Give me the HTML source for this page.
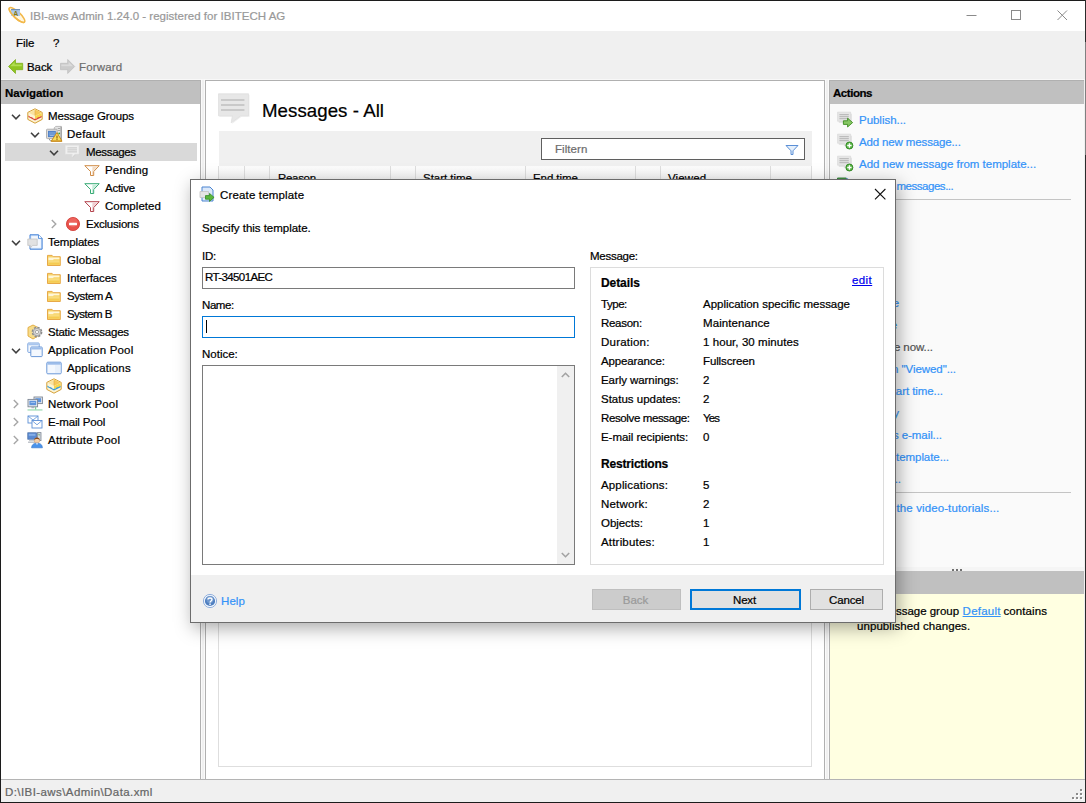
<!DOCTYPE html>
<html><head><meta charset="utf-8"><title>IBI-aws Admin</title>
<style>
*{box-sizing:border-box;margin:0;padding:0}
html,body{width:1086px;height:803px;overflow:hidden;background:#f0f0f0}
body{font-family:"Liberation Sans",sans-serif;font-size:11.5px;color:#000;position:relative;-webkit-text-stroke:.22px}
.a{position:absolute;white-space:nowrap}
svg{position:absolute;display:block;overflow:visible}
.t{position:absolute;white-space:nowrap;height:18px;line-height:18px;font-size:11.5px}
.lnk{color:#3493f8}
.b{font-weight:bold}
</style></head><body>
<div class="a" style="left:1px;top:1px;width:1084px;height:30px;background:#fff"></div>
<svg style="left:8px;top:7px" width="18" height="17" viewBox="0 0 18 17"><ellipse cx="9" cy="8" rx="10.3" ry="3.2" fill="#fff0cc" fill-opacity=".6" stroke="#f2b84a" stroke-width="1.5" transform="rotate(43 9 8)"/>
<rect x="3" y="2" width="9" height="7" fill="#a8c8ee" fill-opacity=".9"/><rect x="3" y="2" width="9" height="1.2" fill="#6f8fb4"/>
<text x="5.2" y="8.6" font-family="Liberation Sans,sans-serif" font-size="7" font-weight="bold" fill="#8a7a10">A</text>
<ellipse cx="9" cy="8" rx="10.3" ry="3.2" fill="none" stroke="#f2b84a" stroke-width="1.5" pathLength="100" stroke-dasharray="50 50" transform="rotate(43 9 8)"/></svg>
<div class="t" id="title" style="left:30px;top:7px;color:#999;letter-spacing:0.019px">IBI-aws Admin 1.24.0 - registered for IBITECH AG</div>
<svg style="left:966px;top:10px" width="12" height="12" viewBox="0 0 12 12"><path d="M0.5 5.5 H10.5" stroke="#8a8a8a" stroke-width="1"/></svg>
<svg style="left:1011px;top:10px" width="12" height="12" viewBox="0 0 12 12"><rect x="0.5" y="0.5" width="9" height="9" fill="none" stroke="#8a8a8a" stroke-width="1"/></svg>
<svg style="left:1057px;top:10px" width="12" height="12" viewBox="0 0 12 12"><path d="M0.5 0.5 L10 10 M10 0.5 L0.5 10" stroke="#8a8a8a" stroke-width="1"/></svg>
<div class="t" style="left:16px;top:34px;letter-spacing:-0.058px">File</div>
<div class="t" style="left:53px;top:34px;letter-spacing:-0.606px">?</div>
<svg style="left:8px;top:59px" width="16" height="16" viewBox="0 0 16 16"><path d="M0.5 7.5 L7.5 0.5 L7.5 4.3 L14.7 4.3 L14.7 10.7 L7.5 10.7 L7.5 14.5 Z" fill="#8fc520" stroke="#78ab14" stroke-width=".7" stroke-linejoin="round"/>
<path d="M2.2 7.3 L6.6 2.9 L6.6 5.4 L13.8 5.4 L13.8 7.3 Z" fill="#b7e25a" opacity=".85"/></svg>
<svg style="left:60px;top:59px" width="16" height="16" viewBox="0 0 16 16"><path d="M14.7 7.5 L7.7 0.5 L7.7 4.3 L0.5 4.3 L0.5 10.7 L7.7 10.7 L7.7 14.5 Z" fill="#cbcbcb" stroke="#bcbcbc" stroke-width=".7" stroke-linejoin="round"/>
<path d="M13 7.3 L8.6 2.9 L8.6 5.4 L1.4 5.4 L1.4 7.3 Z" fill="#dedede" opacity=".85"/></svg>
<div class="t" style="left:27px;top:58px;letter-spacing:-0.07px">Back</div>
<div class="t" style="left:79px;top:58px;color:#6d6d6d;letter-spacing:0.159px">Forward</div>
<div class="a" style="left:1px;top:79px;width:1084px;height:1px;background:#f8f8f8"></div>
<div class="a" style="left:201px;top:79px;width:4px;height:700px;border-left:1px solid #fafafa;border-right:1px solid #fafafa"></div>
<div class="a" style="left:825px;top:79px;width:4px;height:700px;border-left:1px solid #fafafa;border-right:1px solid #fafafa"></div>
<div class="a" style="left:1px;top:80px;width:200px;height:700px;background:#fff;border-right:1px solid #b0b0b0;border-top:1px solid #b0b0b0"></div>
<div class="a" style="left:1px;top:81px;width:199px;height:23px;background:#c0c0c0"></div>
<div class="t b" style="left:5px;top:84px;letter-spacing:-0.07px">Navigation</div>
<div class="a" style="left:5px;top:143px;width:192px;height:18px;background:#d9d9d9"></div>
<svg style="left:10.5px;top:114px" width="10" height="6" viewBox="0 0 10 6"><path d="M1 0.8 L5 4.8 L9 0.8" fill="none" stroke="#404040" stroke-width="1.6"/></svg>
<svg style="left:27px;top:108px" width="16" height="16" viewBox="0 0 16 16"><path d="M8 0.8 L15.2 4.4 L15.2 11.4 L8 15.2 L0.8 11.4 L0.8 4.4 Z" fill="#fdf4d4" stroke="#d4a038" stroke-width="1" stroke-linejoin="round"/>
<path d="M8 8 L14.6 4.9 L14.6 8.2 L8 11.3 Z" fill="#f8d64a"/>
<path d="M8 1.6 L14.4 4.8 L8 8 L1.6 4.8 Z" fill="#f9e3a2"/>
<path d="M8 1.6 L14.4 4.8 L8 8 Z" fill="#f6c85a"/>
<path d="M7.6 2.6 h.8 v4.6 h-.8z" fill="#e0a840" opacity=".7"/>
<path d="M1.4 7.5 L3.4 8.9 L5 9.2 L6.4 10.4 L8 10.9 L9.6 10.4 L11 9.2 L12.6 8.9 L14.6 7.7 L14.6 9.3 L8 12.6 L1.4 9.1 Z" fill="#d8433a"/></svg>
<div class="t nv" style="left:48px;top:107px;letter-spacing:-0.12px">Message Groups</div>
<svg style="left:29.5px;top:132px" width="10" height="6" viewBox="0 0 10 6"><path d="M1 0.8 L5 4.8 L9 0.8" fill="none" stroke="#404040" stroke-width="1.6"/></svg>
<svg style="left:46px;top:126px" width="16" height="16" viewBox="0 0 16 16"><path d="M8.2 1.8 l1.6 -1.4 h5.6 v13.8 h-7.2z" fill="#e4e4e4" stroke="#a4a4a4" stroke-width=".7"/>
<rect x="14.6" y="0.8" width=".9" height="13" fill="#8e8e8e"/>
<rect x="11.8" y="2.2" width="2.4" height=".8" fill="#9a9a9a"/><rect x="11.8" y="4" width="2.4" height=".8" fill="#9a9a9a"/>
<circle cx="13.2" cy="7.4" r=".9" fill="#3aa832"/>
<rect x="0.5" y="3.2" width="10.6" height="9.4" rx=".8" fill="#dcdcdc" stroke="#a2a2a2" stroke-width=".8"/>
<rect x="2" y="4.9" width="7.8" height="6.2" fill="#4c7ec6"/><rect x="2.8" y="5.8" width="6.2" height="4.4" fill="#6e9ad6"/>
<rect x="4" y="9.2" width="3.6" height=".7" fill="#a8c4ea"/>
<path d="M3.4 13 c0 1.6 1 2 2.6 2" fill="none" stroke="#8e949c" stroke-width="1"/>
<path d="M11 6.6 L16 15.2 L5.2 15.2 Z" fill="#f8de5c" stroke="#c98a1e" stroke-width="1" stroke-linejoin="round"/>
<rect x="5.4" y="14.6" width="10.4" height="1" fill="#c98a1e"/>
<rect x="10.4" y="9.6" width="1.2" height="3" fill="#9a6410"/><rect x="10.4" y="13.1" width="1.2" height="1" fill="#9a6410"/></svg>
<div class="t nv" style="left:67px;top:125px;letter-spacing:0.237px">Default</div>
<svg style="left:48.5px;top:150px" width="10" height="6" viewBox="0 0 10 6"><path d="M1 0.8 L5 4.8 L9 0.8" fill="none" stroke="#404040" stroke-width="1.6"/></svg>
<svg style="left:65px;top:144px" width="16" height="16" viewBox="0 0 16 16"><path d="M1.3 2.4 h13.4 v8.6 h-4 l-2.8 2.8 l0.2 -2.8 h-6.8z" fill="#cfcfcf" opacity=".5"/>
<path d="M0.5 1.5 h13.4 v8.6 h-4 l-2.8 2.8 l0.2 -2.8 h-6.8z" fill="#f0f0f0" stroke="#e6e6e6" stroke-width=".7"/>
<rect x="2.4" y="3.4" width="9.6" height="1" fill="#c6c6c6"/><rect x="2.4" y="5.4" width="9.6" height="1" fill="#c6c6c6"/><rect x="2.4" y="7.4" width="9.6" height="1" fill="#c6c6c6"/></svg>
<div class="t nv" style="left:86px;top:143px;letter-spacing:-0.328px">Messages</div>
<svg style="left:84px;top:162px" width="16" height="16" viewBox="0 0 16 16"><path d="M0.8 3.7 L15.2 3.7 L9.7 9.5 L9.7 13.5 L6.5 13.5 L6.5 9.5 Z" fill="#fff" stroke="#d08c46" stroke-width="1" stroke-linejoin="round"/>
<path d="M8.5 4.4 L13.6 4.4 L9 9.2 L9 12.8 L8 12.8 Z" fill="#f3dcc4"/></svg>
<div class="t nv" style="left:105px;top:161px;letter-spacing:0.169px">Pending</div>
<svg style="left:84px;top:180px" width="16" height="16" viewBox="0 0 16 16"><path d="M0.8 3.7 L15.2 3.7 L9.7 9.5 L9.7 13.5 L6.5 13.5 L6.5 9.5 Z" fill="#fff" stroke="#36aa74" stroke-width="1" stroke-linejoin="round"/>
<path d="M8.5 4.4 L13.6 4.4 L9 9.2 L9 12.8 L8 12.8 Z" fill="#c4ecd8"/></svg>
<div class="t nv" style="left:105px;top:179px;letter-spacing:-0.255px">Active</div>
<svg style="left:84px;top:198px" width="16" height="16" viewBox="0 0 16 16"><path d="M0.8 3.7 L15.2 3.7 L9.7 9.5 L9.7 13.5 L6.5 13.5 L6.5 9.5 Z" fill="#fff" stroke="#b3424c" stroke-width="1" stroke-linejoin="round"/>
<path d="M8.5 4.4 L13.6 4.4 L9 9.2 L9 12.8 L8 12.8 Z" fill="#efcdd0"/></svg>
<div class="t nv" style="left:105px;top:197px;letter-spacing:0.031px">Completed</div>
<svg style="left:51.0px;top:219px" width="6" height="10" viewBox="0 0 6 10"><path d="M0.8 1 L4.8 5 L0.8 9" fill="none" stroke="#a6a6a6" stroke-width="1.4"/></svg>
<svg style="left:65px;top:216px" width="16" height="16" viewBox="0 0 16 16"><circle cx="8" cy="8" r="6.6" fill="#e8514a" stroke="#d03a34" stroke-width=".8"/>
<circle cx="8" cy="6.6" r="4.6" fill="#f0716a" opacity=".6"/>
<rect x="4" y="6.7" width="8" height="2.6" rx=".6" fill="#fff"/></svg>
<div class="t nv" style="left:86px;top:215px;letter-spacing:-0.217px">Exclusions</div>
<svg style="left:10.5px;top:240px" width="10" height="6" viewBox="0 0 10 6"><path d="M1 0.8 L5 4.8 L9 0.8" fill="none" stroke="#404040" stroke-width="1.6"/></svg>
<svg style="left:27px;top:234px" width="16" height="16" viewBox="0 0 16 16"><path d="M3 0.8 h8.5 l3.6 3.6 v10.8 h-12.1z" fill="#d6e6fb" stroke="#3f7fd6" stroke-width="1"/>
<path d="M4.5 2.2 h6.3 v3 h3 v8.6 h-9.3z" fill="#f4f8fe"/>
<path d="M11.5 0.8 v3.6 h3.6" fill="#fff" stroke="#3f7fd6" stroke-width=".8"/>
<path d="M0.8 5 h9.4 v6.4 h-4.4 l-2.6 2.4 v-2.4 h-2.4z" fill="#e2e2e2" stroke="#c4c4c4" stroke-width=".8"/></svg>
<div class="t nv" style="left:48px;top:233px;letter-spacing:-0.158px">Templates</div>
<svg style="left:46px;top:252px" width="16" height="16" viewBox="0 0 16 16"><path d="M1.5 3.4 h4.6 l1.2 1.3 h7 v8.8 h-12.8z" fill="#f7d468" stroke="#e4a23c" stroke-width=".9" stroke-linejoin="round"/>
<path d="M2.4 5.6 h11 v1.6 h-5.6 l-1 1 h-4.4z" fill="#fff6d8"/>
<rect x="2.4" y="8.4" width="11" height="4.3" fill="#f9dc7e"/>
<rect x="2.4" y="10.6" width="11" height="2.1" fill="#f5cb52"/></svg>
<div class="t nv" style="left:67px;top:251px;letter-spacing:0.125px">Global</div>
<svg style="left:46px;top:270px" width="16" height="16" viewBox="0 0 16 16"><path d="M1.5 3.4 h4.6 l1.2 1.3 h7 v8.8 h-12.8z" fill="#f7d468" stroke="#e4a23c" stroke-width=".9" stroke-linejoin="round"/>
<path d="M2.4 5.6 h11 v1.6 h-5.6 l-1 1 h-4.4z" fill="#fff6d8"/>
<rect x="2.4" y="8.4" width="11" height="4.3" fill="#f9dc7e"/>
<rect x="2.4" y="10.6" width="11" height="2.1" fill="#f5cb52"/></svg>
<div class="t nv" style="left:67px;top:269px;letter-spacing:-0.07px">Interfaces</div>
<svg style="left:46px;top:288px" width="16" height="16" viewBox="0 0 16 16"><path d="M1.5 3.4 h4.6 l1.2 1.3 h7 v8.8 h-12.8z" fill="#f7d468" stroke="#e4a23c" stroke-width=".9" stroke-linejoin="round"/>
<path d="M2.4 5.6 h11 v1.6 h-5.6 l-1 1 h-4.4z" fill="#fff6d8"/>
<rect x="2.4" y="8.4" width="11" height="4.3" fill="#f9dc7e"/>
<rect x="2.4" y="10.6" width="11" height="2.1" fill="#f5cb52"/></svg>
<div class="t nv" style="left:67px;top:287px;letter-spacing:-0.41px">System A</div>
<svg style="left:46px;top:306px" width="16" height="16" viewBox="0 0 16 16"><path d="M1.5 3.4 h4.6 l1.2 1.3 h7 v8.8 h-12.8z" fill="#f7d468" stroke="#e4a23c" stroke-width=".9" stroke-linejoin="round"/>
<path d="M2.4 5.6 h11 v1.6 h-5.6 l-1 1 h-4.4z" fill="#fff6d8"/>
<rect x="2.4" y="8.4" width="11" height="4.3" fill="#f9dc7e"/>
<rect x="2.4" y="10.6" width="11" height="2.1" fill="#f5cb52"/></svg>
<div class="t nv" style="left:67px;top:305px;letter-spacing:-0.552px">System B</div>
<svg style="left:27px;top:324px" width="16" height="16" viewBox="0 0 16 16"><path d="M6 1 L11 3.5 L11 12 L6 15 L1 12 L1 3.5 Z" fill="#f7dc8a" stroke="#e0a83a" stroke-width=".9"/>
<circle cx="10" cy="8" r="4.6" fill="#cfcfcf" stroke="#8c8c8c" stroke-width="1.6" stroke-dasharray="2.2 1.4"/>
<circle cx="10" cy="8" r="3.6" fill="#d9d9d9" stroke="#9a9a9a" stroke-width=".7"/>
<circle cx="10" cy="8" r="1.6" fill="#fff" stroke="#8c8c8c" stroke-width=".7"/></svg>
<div class="t nv" style="left:48px;top:323px;letter-spacing:-0.238px">Static Messages</div>
<svg style="left:10.5px;top:348px" width="10" height="6" viewBox="0 0 10 6"><path d="M1 0.8 L5 4.8 L9 0.8" fill="none" stroke="#404040" stroke-width="1.6"/></svg>
<svg style="left:27px;top:342px" width="16" height="16" viewBox="0 0 16 16"><rect x="0.8" y="1" width="11.4" height="9.4" rx=".8" fill="#f4f8fe" stroke="#7ba4de" stroke-width="1"/>
<rect x="1.3" y="1.5" width="10.4" height="1.8" fill="#a9c6ee"/>
<rect x="3.8" y="5" width="11.4" height="9.6" rx=".8" fill="#f4f8fe" stroke="#6a98d8" stroke-width="1"/>
<rect x="4.3" y="5.5" width="10.4" height="2" fill="#9dbdea"/></svg>
<div class="t nv" style="left:48px;top:341px;letter-spacing:0.182px">Application Pool</div>
<svg style="left:46px;top:360px" width="16" height="16" viewBox="0 0 16 16"><rect x="0.8" y="2.2" width="14.4" height="11.6" rx="1" fill="#f4f8fe" stroke="#6a98d8" stroke-width="1"/>
<rect x="1.3" y="2.7" width="13.4" height="2" fill="#9dbdea"/>
<rect x="9" y="5" width="5.5" height="8" fill="#e2ecfa" opacity=".7"/></svg>
<div class="t nv" style="left:67px;top:359px;letter-spacing:0.149px">Applications</div>
<svg style="left:46px;top:378px" width="16" height="16" viewBox="0 0 16 16"><path d="M8 0.8 L15.2 4.4 L15.2 11.4 L8 15.2 L0.8 11.4 L0.8 4.4 Z" fill="#fdf4d4" stroke="#d4a038" stroke-width="1" stroke-linejoin="round"/>
<path d="M8 8 L14.6 4.9 L14.6 8.2 L8 11.3 Z" fill="#f8d64a"/>
<path d="M8 1.6 L14.4 4.8 L8 8 L1.6 4.8 Z" fill="#f9e3a2"/>
<path d="M8 1.6 L14.4 4.8 L8 8 Z" fill="#f6c85a"/>
<path d="M7.6 2.6 h.8 v4.6 h-.8z" fill="#e0a840" opacity=".7"/>
<path d="M1.4 7.5 L3.4 8.9 L5 9.2 L6.4 10.4 L8 10.9 L9.6 10.4 L11 9.2 L12.6 8.9 L14.6 7.7 L14.6 9.3 L8 12.6 L1.4 9.1 Z" fill="#3a9bd8"/></svg>
<div class="t nv" style="left:67px;top:377px;letter-spacing:0.014px">Groups</div>
<svg style="left:13.0px;top:399px" width="6" height="10" viewBox="0 0 6 10"><path d="M0.8 1 L4.8 5 L0.8 9" fill="none" stroke="#a6a6a6" stroke-width="1.4"/></svg>
<svg style="left:27px;top:396px" width="16" height="16" viewBox="0 0 16 16"><rect x="7" y="1" width="8.4" height="6.6" fill="#e6e9ee" stroke="#7d8794" stroke-width=".9"/>
<rect x="8.3" y="2.2" width="5.8" height="4" fill="#5f94dc"/>
<rect x="1" y="3.4" width="9.6" height="7.4" fill="#e6e9ee" stroke="#7d8794" stroke-width=".9"/>
<rect x="2.4" y="4.8" width="6.8" height="4.4" fill="#5f94dc"/>
<rect x="3.6" y="6" width="4.4" height="1" fill="#9fc0ee"/>
<rect x="4.4" y="11.2" width="3" height="1" fill="#9aa3b0"/>
<rect x="8" y="11" width="1.2" height="2.6" fill="#7ccf9c"/>
<rect x="0.5" y="13.4" width="15" height="1.1" fill="#8fd6aa"/></svg>
<div class="t nv" style="left:48px;top:395px;letter-spacing:0.142px">Network Pool</div>
<svg style="left:13.0px;top:417px" width="6" height="10" viewBox="0 0 6 10"><path d="M0.8 1 L4.8 5 L0.8 9" fill="none" stroke="#a6a6a6" stroke-width="1.4"/></svg>
<svg style="left:27px;top:414px" width="16" height="16" viewBox="0 0 16 16"><rect x="1" y="2" width="10" height="7" fill="#fff" stroke="#5b8fd6" stroke-width=".9"/>
<path d="M1 2 L6 6 L11 2" fill="none" stroke="#5b8fd6" stroke-width=".8"/>
<rect x="5" y="6.5" width="10" height="7.5" fill="#fff" stroke="#5b8fd6" stroke-width=".9"/>
<path d="M5 6.5 L10 10.8 L15 6.5" fill="none" stroke="#5b8fd6" stroke-width=".8"/></svg>
<div class="t nv" style="left:48px;top:413px;letter-spacing:-0.138px">E-mail Pool</div>
<svg style="left:13.0px;top:435px" width="6" height="10" viewBox="0 0 6 10"><path d="M0.8 1 L4.8 5 L0.8 9" fill="none" stroke="#a6a6a6" stroke-width="1.4"/></svg>
<svg style="left:27px;top:432px" width="16" height="16" viewBox="0 0 16 16"><rect x="0.8" y="0.8" width="8.6" height="6.4" fill="#5a8ad2" stroke="#4a6fa8" stroke-width=".8"/>
<rect x="1.8" y="1.8" width="6.6" height="2" fill="#86aee6"/>
<rect x="10.4" y="0.6" width="3.6" height="8" fill="#d4d8de" stroke="#7d8794" stroke-width=".8"/>
<path d="M11.6 1.6 l1.4 1.6 l-1.4 0z" fill="#3aa03a"/>
<rect x="2" y="8" width="6" height="1.2" fill="#c6cad0"/><rect x="1" y="9.6" width="7" height="1.2" fill="#b4b9c0"/>
<circle cx="10" cy="8.6" r="2.7" fill="#f6cfa6" stroke="#c98f5c" stroke-width=".5"/>
<path d="M7.2 8 C7 4.6 13 4.6 12.8 8 C11.6 6.6 8.4 6.6 7.2 8Z" fill="#8a4e1e"/>
<path d="M4.6 15.8 C4.8 12 7.4 11.2 10 11.2 C12.6 11.2 15.2 12 15.4 15.8 Z" fill="#4a93ea" stroke="#2f72c8" stroke-width=".6"/>
<path d="M9 11.3 l1 1.6 l1 -1.6z" fill="#fff"/></svg>
<div class="t nv" style="left:48px;top:431px;letter-spacing:0.225px">Attribute Pool</div>
<div class="a" style="left:205px;top:80px;width:620px;height:700px;background:#fff;border:1px solid #b0b0b0"></div>
<svg style="left:218px;top:92px" width="32" height="32" viewBox="0 0 32 32"><path d="M1.5 2.8 h30 v22 h-8 l-9.3 7 l1.2 -7 h-13.9z" fill="#d8d8d8" opacity=".45"/>
<path d="M0.5 1.8 h30 v22 h-8 l-9.3 7 l1.2 -7 h-13.9z" fill="#e7e7e7" stroke="#e0e0e0" stroke-width=".8"/>
<rect x="3" y="7" width="23.4" height="2" fill="#c9c9c9"/><rect x="3" y="12" width="23.4" height="2" fill="#c9c9c9"/><rect x="3" y="17" width="23.4" height="2" fill="#c9c9c9"/></svg>
<div class="a" id="heading" style="left:262px;top:99px;font-size:18.7px;line-height:24px;letter-spacing:0.035px">Messages - All</div>
<div class="a" style="left:219px;top:131px;width:593px;height:35px;background:#f0f0f0"></div>
<div class="a" style="left:541px;top:138px;width:264px;height:22px;background:#fff;border:1px solid #5f5f5f"></div>
<div class="t" style="left:555px;top:140px;color:#6d6d6d;letter-spacing:0.064px">Filtern</div>
<svg style="left:785px;top:144px" width="14" height="12" viewBox="0 0 14 12"><path d="M1 1.5 L13 1.5 L8 6.8 L8 10.5 L6 10.5 L6 6.8 Z" fill="#e6f0fb" stroke="#5b8fd6" stroke-width="1" stroke-linejoin="round"/></svg>
<div class="a" style="left:218px;top:166px;width:594px;height:601px;border:1px solid #dedede;border-top:none"></div>
<div class="a" style="left:219px;top:166px;width:593px;height:24px;background:linear-gradient(#fcfcfc,#f3f3f3)"></div>
<div class="a" style="left:244px;top:166px;width:1px;height:24px;background:#dedede"></div>
<div class="a" style="left:269px;top:166px;width:1px;height:24px;background:#dedede"></div>
<div class="a" style="left:390px;top:166px;width:1px;height:24px;background:#dedede"></div>
<div class="a" style="left:415px;top:166px;width:1px;height:24px;background:#dedede"></div>
<div class="a" style="left:525px;top:166px;width:1px;height:24px;background:#dedede"></div>
<div class="a" style="left:635px;top:166px;width:1px;height:24px;background:#dedede"></div>
<div class="a" style="left:660px;top:166px;width:1px;height:24px;background:#dedede"></div>
<div class="a" style="left:770px;top:166px;width:1px;height:24px;background:#dedede"></div>
<div class="a" style="left:811px;top:166px;width:1px;height:24px;background:#dedede"></div>
<div class="t" style="left:278px;top:169px;letter-spacing:-0.307px">Reason</div>
<div class="t" style="left:423px;top:169px;letter-spacing:-0.042px">Start time</div>
<div class="t" style="left:533px;top:169px;letter-spacing:-0.074px">End time</div>
<div class="t" style="left:668px;top:169px;letter-spacing:0.114px">Viewed</div>
<div class="a" style="left:830px;top:80px;width:254px;height:491px;background:#fafafa"></div>
<div class="a" style="left:829px;top:80px;width:1px;height:700px;background:#b0b0b0"></div>
<div class="a" style="left:829px;top:80px;width:255px;height:1px;background:#b0b0b0"></div>
<div class="a" style="left:830px;top:81px;width:254px;height:23px;background:#c0c0c0"></div>
<div class="t b" style="left:833px;top:84px;letter-spacing:-0.453px">Actions</div>
<svg style="left:837px;top:111px" width="16" height="16" viewBox="0 0 16 16"><path d="M1.8 2.8 h13 v9 h-3.5 l-2.8 2.6 l.2 -2.6 h-6.9z" fill="#c8c8c8" opacity=".55"/><path d="M0.6 1.2 h13 v9 h-3.5 l-2.8 2.6 l.2 -2.6 h-6.9z" fill="#e6e6e6" stroke="#dadada" stroke-width=".8"/>
<rect x="2.4" y="3.2" width="9.4" height="1" fill="#b2b2b2"/><rect x="2.4" y="5.2" width="9.4" height="1" fill="#b2b2b2"/><rect x="2.4" y="7.2" width="9.4" height="1" fill="#b2b2b2"/><path d="M6.4 9.8 h4.2 v-2.6 l5 4.4 l-5 4.4 v-2.6 h-4.2z" fill="#86c763" stroke="#3c8c20" stroke-width=".9" stroke-linejoin="round"/></svg>
<svg style="left:837px;top:133px" width="16" height="16" viewBox="0 0 16 16"><path d="M1.8 2.8 h13 v9 h-3.5 l-2.8 2.6 l.2 -2.6 h-6.9z" fill="#c8c8c8" opacity=".55"/><path d="M0.6 1.2 h13 v9 h-3.5 l-2.8 2.6 l.2 -2.6 h-6.9z" fill="#e6e6e6" stroke="#dadada" stroke-width=".8"/>
<rect x="2.4" y="3.2" width="9.4" height="1" fill="#b2b2b2"/><rect x="2.4" y="5.2" width="9.4" height="1" fill="#b2b2b2"/><rect x="2.4" y="7.2" width="9.4" height="1" fill="#b2b2b2"/><circle cx="12.4" cy="12.5" r="3.5" fill="#5cb848" stroke="#2f8520" stroke-width=".9"/><path d="M12.4 10.3 v4.4 M10.2 12.5 h4.4" stroke="#fff" stroke-width="1.3"/></svg>
<svg style="left:837px;top:155px" width="16" height="16" viewBox="0 0 16 16"><path d="M1.8 2.8 h13 v9 h-3.5 l-2.8 2.6 l.2 -2.6 h-6.9z" fill="#c8c8c8" opacity=".55"/><path d="M0.6 1.2 h13 v9 h-3.5 l-2.8 2.6 l.2 -2.6 h-6.9z" fill="#e6e6e6" stroke="#dadada" stroke-width=".8"/>
<rect x="2.4" y="3.2" width="9.4" height="1" fill="#b2b2b2"/><rect x="2.4" y="5.2" width="9.4" height="1" fill="#b2b2b2"/><rect x="2.4" y="7.2" width="9.4" height="1" fill="#b2b2b2"/><circle cx="12.4" cy="12.5" r="3.5" fill="#5cb848" stroke="#2f8520" stroke-width=".9"/><path d="M12.4 10.3 v4.4 M10.2 12.5 h4.4" stroke="#fff" stroke-width="1.3"/></svg>
<svg style="left:837px;top:177px" width="16" height="16" viewBox="0 0 16 16"><path d="M0.5 1 h8.5 l2.6 2.4 v11 h-11.1z" fill="#4f9f4f" stroke="#2e7d32" stroke-width=".9"/><path d="M9.4 0.6 l3.6 2.6 v3 l-3.6 -2.4z" fill="#5b8fd6"/></svg>
<div class="t lnk" style="left:859px;top:111px;letter-spacing:-0.031px">Publish...</div>
<div class="t lnk" style="left:859px;top:133px;letter-spacing:-0.139px">Add new message...</div>
<div class="t lnk" style="left:859px;top:155px;letter-spacing:-0.019px">Add new message from template...</div>
<div class="t lnk ra" style="right:193px;top:177px;letter-spacing:-0.076px">Import</div>
<div class="t lnk" style="left:896.5px;top:177px;letter-spacing:-0.473px">messages...</div>
<div class="a" style="left:837px;top:199px;width:234px;height:1px;background:#c4c4c4"></div>
<div class="t lnk ra" style="right:187px;top:294px;letter-spacing:-0.083px">Resolve</div>
<div class="t lnk ra" style="right:189px;top:316px;letter-spacing:-0.078px">Delete</div>
<div class="t  ra" style="right:153px;top:338px;color:#555;letter-spacing:-0.069px">Activate now...</div>
<div class="t lnk ra" style="right:130px;top:360px;letter-spacing:-0.075px">Reset column "Viewed"...</div>
<div class="t lnk ra" style="right:143px;top:382px;letter-spacing:-0.07px">Change start time...</div>
<div class="t lnk ra" style="right:187px;top:404px;letter-spacing:-0.079px">Modify</div>
<div class="t lnk ra" style="right:144px;top:426px;letter-spacing:-0.071px">Send as e-mail...</div>
<div class="t lnk ra" style="right:137px;top:448px;letter-spacing:-0.073px">Save as template...</div>
<div class="t lnk ra" style="right:185px;top:470px;letter-spacing:-0.075px">Move...</div>
<div class="t lnk ra" style="right:193px;top:499px;letter-spacing:-0.09px">Watch</div>
<div class="t lnk" style="left:896.5px;top:499px;letter-spacing:0.111px">the video-tutorials...</div>
<div class="a" style="left:837px;top:492px;width:234px;height:1px;background:#c4c4c4"></div>
<div class="a" style="left:830px;top:567px;width:254px;height:4px;background:#f5f5f5"></div>
<div class="a" style="left:830px;top:571px;width:254px;height:23px;background:#c0c0c0"></div>
<div class="a" style="left:830px;top:594px;width:254px;height:185px;background:#ffffe1"></div>
<div class="a" style="left:952px;top:569px;width:2px;height:2px;background:#707070"></div>
<div class="a" style="left:956px;top:569px;width:2px;height:2px;background:#707070"></div>
<div class="a" style="left:960px;top:569px;width:2px;height:2px;background:#707070"></div>
<div class="a" style="right:127px;top:604px;height:15px;line-height:15px;letter-spacing:-0.029px">The message group</div>
<div class="a lnk" style="left:962.6px;top:604px;height:15px;line-height:15px;text-decoration:underline;letter-spacing:0.237px">Default</div>
<div class="a" style="left:1003.4px;top:604px;height:15px;line-height:15px;letter-spacing:0.12px">contains</div>
<div class="a" id="info2" style="left:857px;top:619px;height:15px;line-height:15px;letter-spacing:0.065px">unpublished changes.</div>
<div class="a" style="left:1px;top:779px;width:1084px;height:1px;background:#b4b4b4"></div>
<div class="a" style="left:1px;top:780px;width:1084px;height:22px;background:#f0f0f0"></div>
<div class="t" style="left:5px;top:783px;color:#666;letter-spacing:0.416px">D:\IBI-aws\Admin\Data.xml</div>
<div class="a" style="left:1081px;top:790px;width:2px;height:2px;background:#fff"></div>
<div class="a" style="left:1080px;top:789px;width:2px;height:2px;background:#8c8c8c"></div>
<div class="a" style="left:1077px;top:794px;width:2px;height:2px;background:#fff"></div>
<div class="a" style="left:1076px;top:793px;width:2px;height:2px;background:#8c8c8c"></div>
<div class="a" style="left:1081px;top:794px;width:2px;height:2px;background:#fff"></div>
<div class="a" style="left:1080px;top:793px;width:2px;height:2px;background:#8c8c8c"></div>
<div class="a" style="left:1073px;top:798px;width:2px;height:2px;background:#fff"></div>
<div class="a" style="left:1072px;top:797px;width:2px;height:2px;background:#8c8c8c"></div>
<div class="a" style="left:1077px;top:798px;width:2px;height:2px;background:#fff"></div>
<div class="a" style="left:1076px;top:797px;width:2px;height:2px;background:#8c8c8c"></div>
<div class="a" style="left:1081px;top:798px;width:2px;height:2px;background:#fff"></div>
<div class="a" style="left:1080px;top:797px;width:2px;height:2px;background:#8c8c8c"></div>
<div class="a" style="left:190px;top:179px;width:706px;height:444px;background:#fff;border:1px solid #6c6c6c;box-shadow:3px 5px 17px rgba(0,0,0,.34)"></div>
<div class="a" style="left:191px;top:575px;width:704px;height:47px;background:#f0f0f0"></div>
<svg style="left:199px;top:186px" width="16" height="16" viewBox="0 0 16 16"><path d="M3 1 h8 l3 3 v11 h-11z" fill="#dce9fa" stroke="#4a84d0" stroke-width="1"/>
<path d="M1 5.5 h8.5 v6 h-8.5z" fill="#e4e4e4" stroke="#c2c2c2" stroke-width=".8"/>
<path d="M6.5 9.6 h4 v-2.2 l4.6 4 l-4.6 4 v-2.2 h-4z" fill="#5cb63c" stroke="#2e8a22" stroke-width=".8" stroke-linejoin="round"/></svg>
<div class="t" style="left:220px;top:186px;letter-spacing:0.165px">Create template</div>
<svg style="left:874px;top:188px" width="12" height="12" viewBox="0 0 12 12"><path d="M1 1 L11.4 11.4 M11.4 1 L1 11.4" stroke="#111" stroke-width="1.1"/></svg>
<div class="t" style="left:202px;top:219px;letter-spacing:-0.023px">Specify this template.</div>
<div class="t" style="left:202px;top:247px;letter-spacing:-0.301px">ID:</div>
<div class="a" style="left:202px;top:267px;width:373px;height:22px;background:#fff;border:1px solid #7a7a7a"></div>
<div class="t" style="left:205px;top:268px;letter-spacing:-0.605px">RT-34501AEC</div>
<div class="t" style="left:202px;top:296px;letter-spacing:-0.415px">Name:</div>
<div class="a" style="left:202px;top:316px;width:373px;height:22px;background:#fff;border:1px solid #0078d7"></div>
<div class="a" style="left:206px;top:320px;width:1px;height:13px;background:#000"></div>
<div class="t" style="left:202px;top:345px">Notice:</div>
<div class="a" style="left:202px;top:365px;width:373px;height:200px;background:#fff;border:1px solid #7a7a7a"></div>
<div class="a" style="left:557px;top:366px;width:17px;height:198px;background:#f0f0f0"></div>
<svg style="left:561px;top:372px" width="9" height="6" viewBox="0 0 9 6"><path d="M0.8 5 L4.5 1.3 L8.2 5" fill="none" stroke="#a3a3a3" stroke-width="1.6"/></svg>
<svg style="left:561px;top:552px" width="9" height="6" viewBox="0 0 9 6"><path d="M0.8 1 L4.5 4.7 L8.2 1" fill="none" stroke="#a3a3a3" stroke-width="1.6"/></svg>
<div class="t" style="left:590px;top:247px;letter-spacing:-0.257px">Message:</div>
<div class="a" style="left:590px;top:267px;width:294px;height:298px;background:#fff;border:1px solid #dcdcdc"></div>
<div class="a b" id="details" style="left:601px;top:275px;font-size:12px;line-height:16px;letter-spacing:-0.08px">Details</div>
<div class="t" id="edit" style="left:852px;top:271px;color:#0000ee;text-decoration:underline;letter-spacing:0.413px">edit</div>
<div class="t" style="left:601px;top:295px;letter-spacing:-0.468px">Type:</div><div class="t" style="left:703px;top:295px;letter-spacing:-0.024px">Application specific message</div>
<div class="t" style="left:601px;top:314px;letter-spacing:-0.292px">Reason:</div><div class="t" style="left:703px;top:314px;letter-spacing:0.086px">Maintenance</div>
<div class="t" style="left:601px;top:333px;letter-spacing:0.214px">Duration:</div><div class="t" style="left:703px;top:333px;letter-spacing:0.065px">1 hour, 30 minutes</div>
<div class="t" style="left:601px;top:352px;letter-spacing:-0.129px">Appearance:</div><div class="t" style="left:703px;top:352px;letter-spacing:-0.126px">Fullscreen</div>
<div class="t" style="left:601px;top:371px;letter-spacing:-0.068px">Early warnings:</div><div class="t" style="left:703px;top:371px;letter-spacing:-0.09px">2</div>
<div class="t" style="left:601px;top:390px;letter-spacing:-0.008px">Status updates:</div><div class="t" style="left:703px;top:390px;letter-spacing:-0.09px">2</div>
<div class="t" style="left:601px;top:409px;letter-spacing:-0.376px">Resolve message:</div><div class="t" style="left:703px;top:409px;letter-spacing:-0.922px">Yes</div>
<div class="t" style="left:601px;top:428px;letter-spacing:-0.056px">E-mail recipients:</div><div class="t" style="left:703px;top:428px;letter-spacing:-0.09px">0</div>
<div class="a b" id="restr" style="left:601px;top:456px;font-size:12px;line-height:16px;letter-spacing:-0.188px">Restrictions</div>
<div class="t" style="left:601px;top:476px;letter-spacing:0.145px">Applications:</div><div class="t" style="left:703px;top:476px;letter-spacing:-0.09px">5</div>
<div class="t" style="left:601px;top:495px;letter-spacing:0.178px">Network:</div><div class="t" style="left:703px;top:495px;letter-spacing:-0.09px">2</div>
<div class="t" style="left:601px;top:514px;letter-spacing:-0.048px">Objects:</div><div class="t" style="left:703px;top:514px;letter-spacing:-0.09px">1</div>
<div class="t" style="left:601px;top:533px;letter-spacing:0.184px">Attributes:</div><div class="t" style="left:703px;top:533px;letter-spacing:-0.09px">1</div>
<svg style="left:203px;top:594px" width="14" height="14" viewBox="0 0 14 14"><circle cx="7" cy="7" r="6.6" fill="#f4f8fd" stroke="#86a8da" stroke-width=".9"/>
<circle cx="7" cy="7" r="5.1" fill="#4f7fc0"/><circle cx="7" cy="5.4" r="3.6" fill="#86a8d6" opacity=".6"/>
<path d="M5 5.6 C5 3.4 9 3.4 9 5.6 C9 7 7.1 7 7.1 8.6" fill="none" stroke="#fff" stroke-width="1.4"/><rect x="6.3" y="9.5" width="1.5" height="1.4" fill="#fff"/></svg>
<div class="t lnk" style="left:221px;top:592px;letter-spacing:0.086px">Help</div>
<div class="a" style="left:592px;top:589px;width:89px;height:21px;background:#cccccc;border:1px solid #bfbfbf"></div>
<div class="t" style="left:591px;top:591px;width:89px;text-align:center;color:#9a9a9a;letter-spacing:-0.07px">Back</div>
<div class="a" style="left:690px;top:589px;width:111px;height:21px;background:#e1e1e1;border:2px solid #0078d7"></div>
<div class="t" style="left:689px;top:591px;width:111px;text-align:center;letter-spacing:-0.214px">Next</div>
<div class="a" style="left:810px;top:589px;width:73px;height:21px;background:#e1e1e1;border:1px solid #adadad"></div>
<div class="t" style="left:810px;top:591px;width:73px;text-align:center;letter-spacing:-0.169px">Cancel</div>
<div class="a" style="left:0;top:0;width:1086px;height:1px;background:#1c1c1c"></div>
<div class="a" style="left:0;top:0;width:1px;height:803px;background:#1c1c1c"></div>
<div class="a" style="left:0;top:802px;width:1086px;height:1px;background:#1c1c1c"></div>
<div class="a" style="left:1085px;top:0;width:1px;height:803px;background:#2b2b2b"></div>
<div class="a" style="left:1085px;top:42px;width:1px;height:113px;background:#808080"></div>
</body></html>
